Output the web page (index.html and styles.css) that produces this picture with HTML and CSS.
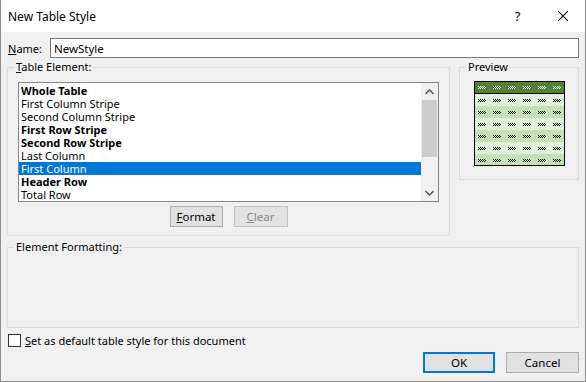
FILE: index.html
```html
<!DOCTYPE html>
<html lang="en">
<head>
    <meta charset="UTF-8">
    <meta name="viewport" content="width=device-width, initial-scale=1.0">
    <title>New Table Style</title>
    <link rel="stylesheet" href="styles.css">
</head>
<body>
    <div class="dialog">
        <div class="titlebar">
            <span class="title">New Table Style</span>
            <span class="caption-btn">?</span>
            <span class="caption-btn">
                <svg width="10" height="10" viewBox="0 0 10 10"><path d="M0 0L10 10M10 0L0 10" stroke="#000" stroke-width="1.1"/></svg>
            </span>
        </div>

        <div class="content">
            <div class="name-row">
                <label class="name-label"><u>N</u>ame:</label>
                <input type="text" class="name-input" value="NewStyle">
            </div>

            <div class="groups">
                <fieldset class="group elements">
                    <legend><u>T</u>able Element:</legend>
                    <div class="listbox">
                        <ul class="items">
                            <li class="bold">Whole Table</li>
                            <li>First Column Stripe</li>
                            <li>Second Column Stripe</li>
                            <li class="bold">First Row Stripe</li>
                            <li class="bold">Second Row Stripe</li>
                            <li>Last Column</li>
                            <li class="selected">First Column</li>
                            <li class="bold">Header Row</li>
                            <li>Total Row</li>
                        </ul>
                        <div class="scrollbar">
                            <div class="arrow">
                                <svg width="9" height="6" viewBox="0 0 9 6"><path d="M0.5 5L4.5 1L8.5 5" fill="none" stroke="#606060" stroke-width="1.6"/></svg>
                            </div>
                            <div class="track"><div class="thumb"></div></div>
                            <div class="arrow">
                                <svg width="9" height="6" viewBox="0 0 9 6"><path d="M0.5 1L4.5 5L8.5 1" fill="none" stroke="#606060" stroke-width="1.6"/></svg>
                            </div>
                        </div>
                    </div>
                    <div class="list-buttons">
                        <button class="btn format"><u>F</u>ormat</button>
                        <button class="btn clear" disabled><u>C</u>lear</button>
                    </div>
                </fieldset>

                <fieldset class="group preview">
                    <legend>Preview</legend>
                    <svg class="preview-table" width="91" height="85" viewBox="0 0 91 85">
                        <defs>
                            <pattern id="mark-dark" width="15" height="3" patternUnits="userSpaceOnUse" x="4">
                                <path d="M0 .5h8M1 1.5h7M0 2.5h8" stroke="#000" stroke-dasharray="1 1"/>
                            </pattern>
                            <pattern id="mark-light" width="15" height="3" patternUnits="userSpaceOnUse" x="4">
                                <path d="M0 .5h8M1 1.5h7M0 2.5h8" stroke="#fff" stroke-dasharray="1 1"/>
                            </pattern>
                        </defs>
                        <rect x="0" y="0" width="91" height="85" fill="#000"/>
                        <rect x="1" y="1" width="89" height="11" fill="#548235"/>
                        <rect x="1" y="13" width="89" height="12" fill="#e2efd9"/>
                        <rect x="1" y="25" width="89" height="12" fill="#c5e0b3"/>
                        <rect x="1" y="37" width="89" height="12" fill="#e2efd9"/>
                        <rect x="1" y="49" width="89" height="12" fill="#c5e0b3"/>
                        <rect x="1" y="61" width="89" height="12" fill="#e2efd9"/>
                        <rect x="1" y="73" width="89" height="11" fill="#c5e0b3"/>
                        <g transform="translate(0,5)"><rect x="4" width="84" height="3" fill="url(#mark-light)"/></g>
                        <g transform="translate(0,18)"><rect x="4" width="84" height="3" fill="url(#mark-dark)"/></g>
                        <g transform="translate(0,30)"><rect x="4" width="84" height="3" fill="url(#mark-dark)"/></g>
                        <g transform="translate(0,42)"><rect x="4" width="84" height="3" fill="url(#mark-dark)"/></g>
                        <g transform="translate(0,54)"><rect x="4" width="84" height="3" fill="url(#mark-dark)"/></g>
                        <g transform="translate(0,66)"><rect x="4" width="84" height="3" fill="url(#mark-dark)"/></g>
                        <g transform="translate(0,78)"><rect x="4" width="84" height="3" fill="url(#mark-dark)"/></g>
                    </svg>
                </fieldset>
            </div>

            <fieldset class="group formatting">
                <legend>Element Formatting:</legend>
                <div class="formatting-body"></div>
            </fieldset>

            <label class="check-row">
                <span class="checkbox"></span>
                <span><u>S</u>et as default table style for this document</span>
            </label>

            <div class="actions">
                <button class="btn ok">OK</button>
                <button class="btn cancel">Cancel</button>
            </div>
        </div>
    </div>
</body>
</html>
```

FILE: styles.css
```css
:root {
    --bg-color: #f0f0f0;
    --text-color: #000;
    --group-border: #dcdcdc;
    --field-border: #7a7a7a;
    --btn-color: #e1e1e1;
    --btn-border: #adadad;
    --accent: #0078d7;
}

* {
    box-sizing: border-box;
}

body {
    margin: 0;
    font-family: "Segoe UI", "Noto Sans", sans-serif;
    font-size: 11px;
    color: var(--text-color);
}

u {
    text-underline-offset: 1px;
}

.dialog {
    width: 586px;
    height: 382px;
    background-color: var(--bg-color);
    border: 1px solid #8f8f8f;
    border-top: none;
    overflow: hidden;
}

/* title bar */
.titlebar {
    height: 32px;
    display: flex;
    align-items: center;
    background-color: #fff;
    padding-left: 7px;
}

.title {
    flex: 1;
    font-size: 12px;
}

.caption-btn {
    width: 45px;
    height: 32px;
    display: flex;
    align-items: center;
    justify-content: center;
    font-size: 13px;
}

/* main area */
.content {
    padding: 0 6px 0 6px;
}

.name-row {
    display: flex;
    align-items: center;
    margin-top: 6px;
    height: 20px;
}

.name-label {
    width: 43px;
    padding-left: 1px;
}

.name-input {
    flex: 1;
    height: 20px;
    border: 1px solid var(--field-border);
    padding: 0 3px;
    font: inherit;
    font-size: 11.5px;
    outline: none;
    background: #fff;
}

.groups {
    display: flex;
    gap: 9px;
    margin-top: 2px;
    align-items: flex-start;
}

.group {
    margin: 0;
    padding: 0;
    border: 1px solid var(--group-border);
    min-width: 0;
}

.group legend {
    margin-left: 6px;
    padding: 0 2px;
    line-height: 14px;
}

.elements {
    width: 443px;
    padding-bottom: 8px;
}

.listbox {
    display: flex;
    width: 421px;
    height: 120px;
    margin: 8px 0 0 10px;
    border: 1px solid #828790;
    background: #fff;
}

.items {
    flex: 1;
    list-style: none;
    margin: 0;
    padding: 1px 0 0 0;
}

.items li {
    height: 13px;
    line-height: 13px;
    padding-left: 2px;
    white-space: nowrap;
}

.items .bold {
    font-weight: bold;
}

.items .selected {
    background-color: var(--accent);
    color: #fff;
}

.scrollbar {
    width: 17px;
    display: flex;
    flex-direction: column;
    background-color: var(--bg-color);
}

.arrow {
    height: 17px;
    display: flex;
    align-items: center;
    justify-content: center;
}

.track {
    flex: 1;
    padding: 0 1px;
}

.thumb {
    height: 57px;
    background-color: #cdcdcd;
}

.list-buttons {
    display: flex;
    justify-content: center;
    gap: 11px;
    width: 421px;
    margin: 4px 0 0 10px;
}

.btn {
    height: 21px;
    padding: 0;
    font: inherit;
    font-size: 11.5px;
    color: var(--text-color);
    background-color: var(--btn-color);
    border: 1px solid var(--btn-border);
}

.format {
    width: 53px;
}

.clear {
    width: 54px;
    color: #8a8a8a;
    background-color: #e3e3e3;
    border-color: #c2c2c2;
}

.preview {
    flex: 1;
    padding-bottom: 13px;
}

.preview-table {
    display: block;
    margin: 7px auto 0;
}

.formatting {
    margin-top: 4px;
}

.formatting-body {
    height: 73px;
}

.check-row {
    display: flex;
    align-items: center;
    gap: 4px;
    margin-top: 6px;
    height: 13px;
    padding-left: 1px;
}

.checkbox {
    width: 13px;
    height: 13px;
    border: 1px solid #333;
    background: #fff;
}

.actions {
    display: flex;
    justify-content: flex-end;
    gap: 11px;
    margin-top: 5px;
}

.ok {
    width: 72px;
    border: 2px solid var(--accent);
}

.cancel {
    width: 73px;
}
```
